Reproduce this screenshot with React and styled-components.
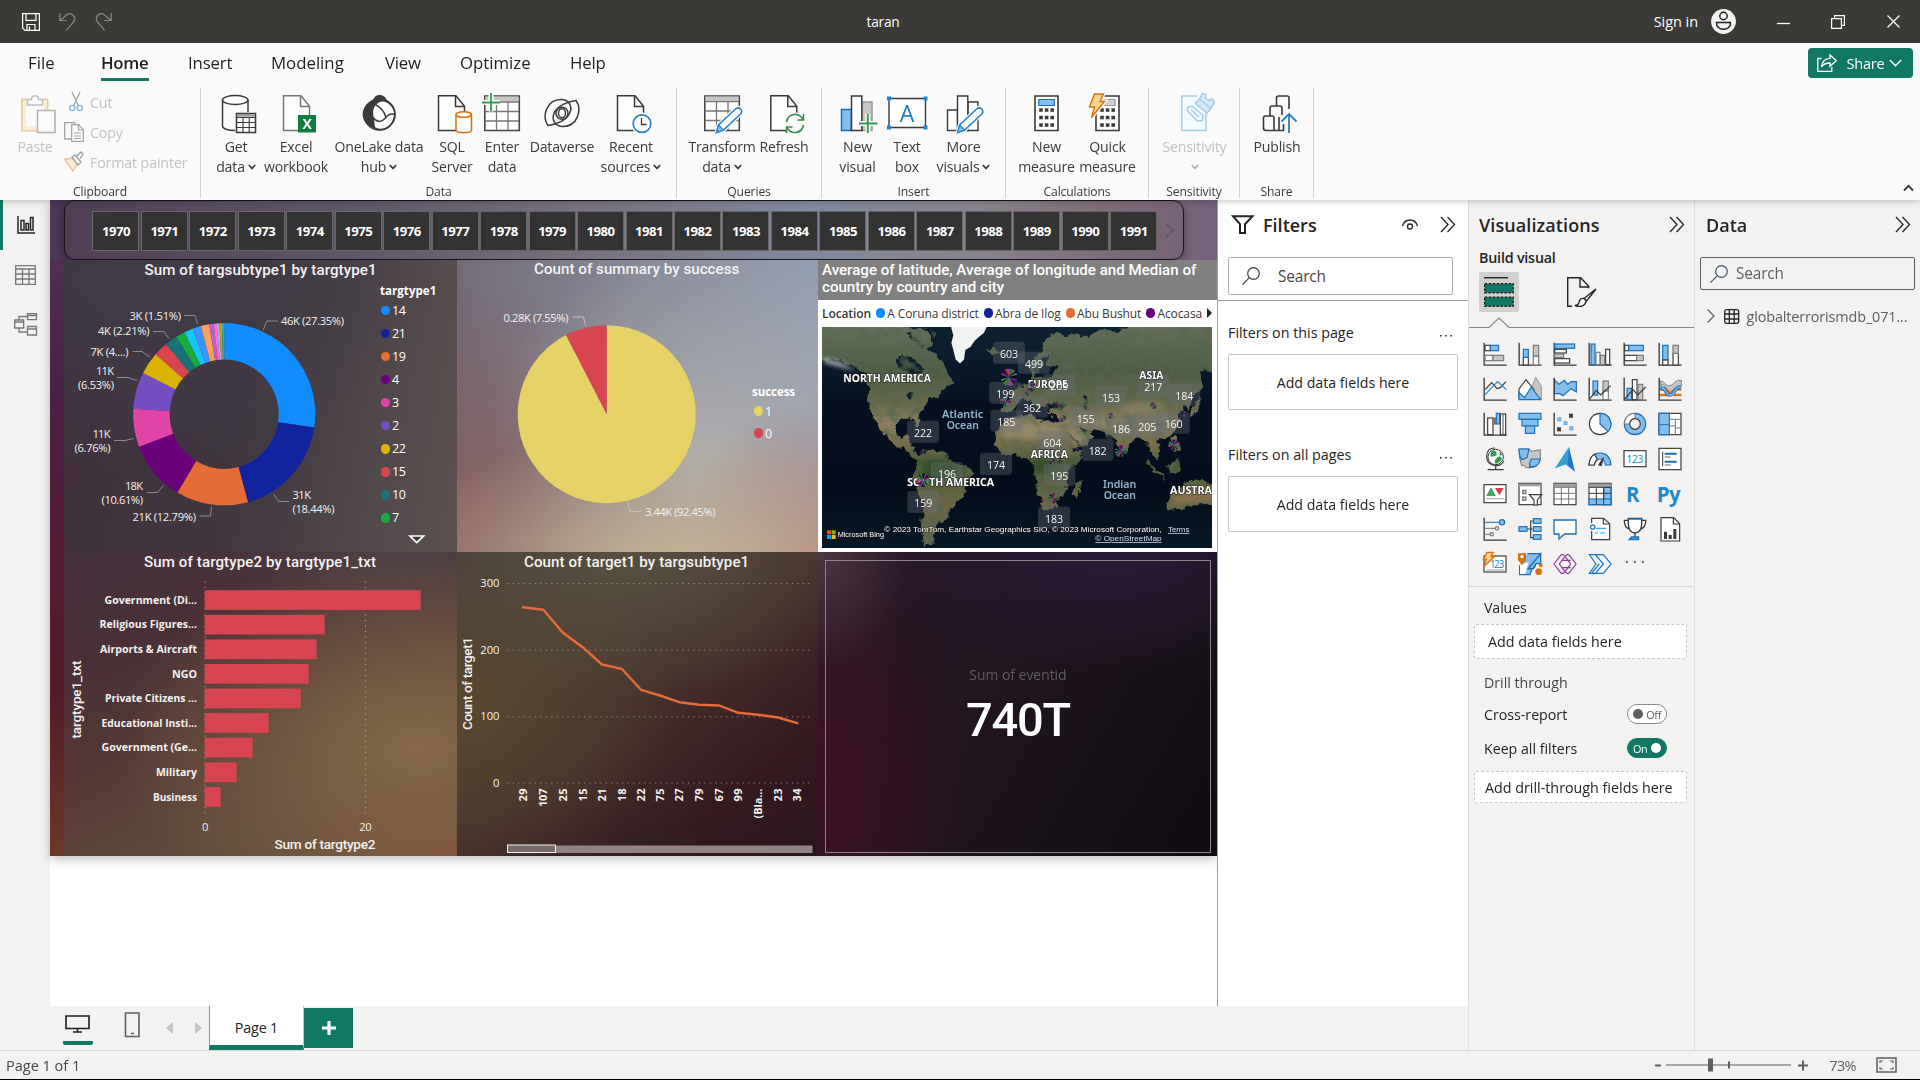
import React from "react";
import styled, { createGlobalStyle, css } from "styled-components";

const GlobalStyle = createGlobalStyle`
  * { box-sizing: border-box; }
  body { margin: 0; background: #f3f2f1; }
  svg { display: block; flex: none; overflow: visible; }
`;

const UI = `"Open Sans", "Noto Sans", sans-serif`;
const DIN = `Roboto, "Open Sans", sans-serif`;
const INK = "#3b3a39";
const GREY = "#797775";
const LGREY = "#c8c6c4";
const BLUE = "#1a6fb8";
const SKY = "#83beec";
const GREEN = "#117865";

/* ---------- shell ---------- */
const App_ = styled.div`
  width: 1920px;
  height: 1080px;
  display: flex;
  flex-direction: column;
  overflow: hidden;
  background: #f3f2f1;
  border-bottom: 1px solid #000;
  font-family: ${UI};
  color: #252423;
`;
const TitleBar = styled.header`
  height: 43px;
  flex: none;
  display: grid;
  grid-template-columns: 1fr auto 1fr;
  align-items: center;
  background: #3b3a37;
  color: #fff;
  font-size: 13.7px;
`;
const QuickAccess = styled.div`
  display: flex;
  gap: 19px;
  padding-left: 22px;
`;
const DocName = styled.div`
  transform: translateX(-77px);
  letter-spacing: -0.2px;
`;
const WindowTools = styled.div`
  display: flex;
  align-items: center;
  justify-content: flex-end;
  padding-right: 20px;
`;
const SignIn = styled.span`
  font-size: 14.5px;
  letter-spacing: -0.05px;
  margin-right: 13px;
`;
const WinBtn = styled.span`
  margin-left: ${(p) => p.$gap}px;
`;

/* ---------- ribbon ---------- */
const Ribbon = styled.section`
  height: 157px;
  flex: none;
  background: #fafafa;
  box-shadow: 0 2px 6px rgba(0, 0, 0, 0.2);
  position: relative;
  z-index: 2;
  display: flex;
  flex-direction: column;
`;
const TabRow = styled.nav`
  height: 45px;
  flex: none;
  display: flex;
  align-items: flex-start;
  padding: 5px 7px 0 28px;
`;
const Tab = styled.span`
  height: 33px;
  width: ${(p) => p.$w}px;
  margin-right: ${(p) => p.$mr}px;
  line-height: 30px;
  font-size: 16.8px;
  letter-spacing: ${(p) => p.$ls ?? -0.2}px;
  white-space: nowrap;
  color: #201f1e;
  ${(p) =>
    p.$active &&
    css`
      font-weight: 600;
      border-bottom: 3px solid ${GREEN};
    `}
`;
const ShareBtn = styled.button`
  margin-left: auto;
  width: 105px;
  height: 30px;
  border: 0;
  border-radius: 4px;
  background: ${GREEN};
  color: #fff;
  font: 14.6px ${UI};
  letter-spacing: -0.2px;
  display: flex;
  align-items: center;
  justify-content: space-between;
  padding: 0 11px 1px 9px;
`;
const ShareText = styled.span`
  margin-left: 5px;
`;
const Groups = styled.div`
  display: flex;
  height: 110px;
  position: relative;
`;
const Group = styled.div`
  width: ${(p) => p.$w}px;
  border-right: 1px solid #d2d0ce;
  display: flex;
  flex-direction: column;
  align-items: center;
`;
const GroupItems = styled.div`
  height: 95px;
  flex: none;
  width: 100%;
  display: flex;
  padding: 5px 0 0 ${(p) => p.$pl ?? 0}px;
`;
const GroupName = styled.div`
  flex: none;
  font-size: 12.1px;
  line-height: 17px;
  letter-spacing: -0.1px;
  color: #3b3a39;
`;
const Item = styled.div`
  width: ${(p) => p.$w}px;
  flex: none;
  display: flex;
  flex-direction: column;
  align-items: center;
  font-size: 14.1px;
  line-height: 20px;
  letter-spacing: -0.17px;
  white-space: nowrap;
  color: ${(p) => (p.$off ? "#c4c2c0" : "#3b3a39")};
`;
const ItemIcon = styled.span`
  height: 44px;
`;
const ItemLine = styled.span`
  height: 20px;
  display: flex;
  align-items: center;
  gap: 3px;
`;
const ClipList = styled.div`
  display: flex;
  flex-direction: column;
  margin-left: 7px;
`;
const ClipRow = styled.div`
  height: 30px;
  margin-top: ${(p) => p.$mt ?? 0}px;
  display: flex;
  align-items: center;
  gap: 6px;
  font-size: 14.2px;
  letter-spacing: -0.12px;
  color: #c4c2c0;
  white-space: nowrap;
`;
const WideGlyph = styled.span`
  margin-left: -5px;
`;
const Collapse = styled.div`
  margin-left: auto;
  align-self: flex-end;
  padding: 0 6px 6px 0;
`;

/* ---------- work area ---------- */
const Work = styled.main`
  flex: 1;
  min-height: 0;
  display: flex;
`;
const Left = styled.div`
  width: 1468px;
  flex: none;
  display: flex;
  flex-direction: column;
`;
const LeftTop = styled.div`
  height: 806px;
  display: flex;
`;
const Rail = styled.nav`
  width: 50px;
  background: #f3f2f1;
`;
const RailItem = styled.div`
  height: ${(p) => p.$h ?? 49}px;
  border-left: 3px solid ${(p) => (p.$active ? GREEN : "transparent")};
  display: flex;
  align-items: center;
  padding-left: ${(p) => p.$pl}px;
`;
const Stage = styled.div`
  width: 1167px;
  background: #fff;
`;
const Report = styled.div`
  height: 656px;
  display: flex;
  flex-direction: column;
  padding-left: 14px;
  box-shadow: 0 3px 10px rgba(0, 0, 0, 0.25);
  background: linear-gradient(180deg, #533757 0%, #4b2147 28%, #571a35 55%, #551a28 75%, #6c3828 100%);
`;
const SlicerRow = styled.div`
  height: 60px;
  margin-left: -14px;
  padding-left: 14px;
  background: linear-gradient(90deg, #4d3855 0%, #5f586c 28%, #7b7282 45%, #848fa6 65%, #8c8791 80%, #7f6a79 92%, #75607c 100%);
`;
const Slicer = styled.div`
  width: 1120px;
  height: 60px;
  padding: 10px 8px 0 27.4px;
  display: flex;
  gap: 1.47px;
  border: 1px solid #17151a;
  border-radius: 11px;
  background: rgba(110, 100, 100, 0.12);
  box-shadow: 0 3px 8px rgba(0, 0, 0, 0.4);
`;
const Year = styled.div`
  width: 47px;
  height: 40px;
  flex: none;
  border: 1px solid #666;
  background: #333;
  color: #fff;
  font-weight: 700;
  font-size: 13.2px;
  letter-spacing: -0.55px;
  line-height: 39px;
  text-align: center;
`;
const SlicerNext = styled.div`
  padding: 12px 0 0 6px;
`;
const VisualRow = styled.div`
  display: grid;
  grid-template-columns: 393px 360.5px 399.5px;
  height: ${(p) => p.$h}px;
`;
const Visual = styled.section`
  display: flex;
  flex-direction: column;
  overflow: hidden;
  min-width: 0;
  color: #fff;
  background: ${(p) => p.$bg};
`;
const VisualTitle = styled.h3`
  margin: ${(p) => p.$mt ?? 0}px 0 0 ${(p) => p.$ml}px;
  height: 20px;
  font: 500 15.1px/20px ${DIN};
  letter-spacing: ${(p) => p.$ls ?? 0.1}px;
  white-space: nowrap;
  color: #f3f2f1;
`;
const VisualBody = styled.div`
  display: flex;
  flex: 1;
`;
const Legend = styled.div`
  display: flex;
  flex-direction: column;
  padding-top: ${(p) => p.$pt}px;
  font-size: 13px;
`;
const LegendTitle = styled.div`
  font-weight: 700;
  font-size: 11.6px;
  height: 18px;
  line-height: 20px;
  letter-spacing: ${(p) => p.$ls ?? 0}px;
`;
const LegendItem = styled.div`
  height: ${(p) => p.$h}px;
  display: flex;
  align-items: center;
  gap: 1.5px;
  font-size: 12.5px;
  letter-spacing: -0.3px;
  padding-left: ${(p) => p.$pl ?? 0}px;
`;
const Dot = styled.i`
  width: 9.4px;
  height: 9.4px;
  border-radius: 50%;
  flex: none;
  background: ${(p) => p.$c};
`;
const LegendMore = styled.div`
  padding: 6px 0 0 28px;
`;

const MapVisual = styled(Visual)`
  background: #fff;
  color: #252423;
`;
const MapTitle = styled.h3`
  margin: 0;
  height: 39.5px;
  background: #808080;
  color: #fff;
  padding: 1.5px 0 0 4.5px;
  font: 500 15.1px/17px ${DIN};
  letter-spacing: 0;
`;
const MapLegend = styled.div`
  height: 27px;
  padding: 0 5px 0 4.5px;
  display: flex;
  align-items: center;
  justify-content: space-between;
  font-size: 12px;
  letter-spacing: -0.1px;
  white-space: nowrap;
  color: #3b3a39;
  b { font-weight: 600; }
`;
const MapKey = styled.span`
  display: inline-flex;
  align-items: center;
  gap: 2px;
`;
const MapBox = styled.div`
  margin-left: 4.5px;
  width: 390px;
  height: 221px;
  overflow: hidden;
`;
const CardFrame = styled.div`
  margin: 8px 6px 3.5px 7.5px;
  flex: 1;
  border: 1px solid #8a8388;
  display: flex;
  flex-direction: column;
  align-items: center;
  padding-top: 104px;
`;
const CardLabel = styled.div`
  font-size: 13.9px;
  line-height: 20px;
  color: #605e5c;
`;
const CardValue = styled.div`
  font: 500 47px/56px ${DIN};
  margin-top: 7px;
  color: #fff;
  letter-spacing: -1.2px;
`;

/* ---------- page tabs ---------- */
const PageBar = styled.div`
  height: 44px;
  display: flex;
  padding-left: 63px;
  background: #f3f2f1;
`;
const ViewMode = styled.div`
  width: 30px;
  height: 39px;
  margin-right: ${(p) => p.$mr}px;
  display: flex;
  justify-content: center;
  align-items: flex-start;
  padding: ${(p) => p.$pt}px 2px 0 0;
  border-bottom: 4px solid ${(p) => (p.$on ? GREEN : "transparent")};
  border-radius: 2px;
`;
const PageArrows = styled.div`
  display: flex;
  gap: 22px;
  padding: 16px 7px 0 19px;
`;
const PageTab = styled.div`
  width: 95px;
  height: 44px;
  background: #fff;
  border-left: 1px solid #979593;
  border-right: 1px solid #c8c6c4;
  border-bottom: 5px solid ${GREEN};
  text-align: center;
  font-size: 14.4px;
  font-weight: 500;
  line-height: 43px;
  letter-spacing: -0.2px;
`;
const AddPage = styled.div`
  width: 49px;
  height: 40px;
  margin-top: 2px;
  background: ${GREEN};
  display: grid;
  place-items: center;
`;

/* ---------- panes ---------- */
const Filters = styled.aside`
  width: 251px;
  background: #fff;
  border-left: 1px solid #a19f9d;
  display: flex;
  flex-direction: column;
`;
const FilterTop = styled.div`
  height: 101px;
  border-bottom: 1px solid #a19f9d;
  padding: 12px 12px 0 10px;
`;
const PaneHead = styled.div`
  height: 25px;
  display: flex;
  align-items: center;
  font-size: 18px;
  font-weight: 600;
  letter-spacing: ${(p) => p.$ls ?? 0}px;
`;
const PaneTitle = styled.span`
  flex: 1;
  margin-left: ${(p) => p.$ml ?? 0}px;
`;
const EyeWrap = styled.span`
  margin-right: 22px;
`;
const SearchBox = styled.div`
  width: ${(p) => p.$w}px;
  height: ${(p) => p.$h}px;
  margin-top: 20px;
  border: 1px solid ${(p) => p.$bc};
  border-radius: 2px;
  display: flex;
  align-items: center;
  gap: ${(p) => p.$gap}px;
  padding-left: ${(p) => p.$pl}px;
  font-size: 15.4px;
  letter-spacing: -0.15px;
  color: ${(p) => p.$c};
`;
const FilterGroup = styled.div`
  padding: 0 10px 0 10px;
  margin-top: ${(p) => p.$mt}px;
`;
const FilterHead = styled.div`
  height: 32px;
  display: flex;
  justify-content: space-between;
  font-size: 14.3px;
  line-height: 21px;
  padding-right: 5px;
`;
const DropWell = styled.div`
  height: 56px;
  border: 1px solid #c8c6c4;
  border-radius: 2px;
  display: grid;
  place-items: center;
  font-size: 14.2px;
  padding-top: 1px;
`;
const Viz = styled.aside`
  width: 226px;
  flex: none;
  border-left: 1px solid #e1dfdd;
  display: flex;
  flex-direction: column;
`;
const VizHead = styled.div`
  padding: 12px 9px 0 10px;
`;
const BuildLabel = styled.div`
  font-size: 14.3px;
  font-weight: 600;
  letter-spacing: -0.2px;
  line-height: 20px;
  margin-top: 11px;
`;
const ModeRow = styled.div`
  display: flex;
  gap: 43px;
  margin-top: 4px;
`;
const Mode = styled.span`
  width: 40px;
  height: 40px;
  border-radius: 2px;
  background: ${(p) => (p.$on ? "#d2d0ce" : "transparent")};
  display: grid;
  place-items: center;
`;
const IconGrid = styled.div`
  display: grid;
  grid-template-columns: repeat(6, 35px);
  grid-auto-rows: 35px;
  padding: 8px 0 0 8px;
  height: 259px;
  place-items: center;
  border-bottom: 1px solid #d8d6d4;
`;
const Glyph = styled.span`
  font: 700 20.5px/24px ${UI};
  color: #2288c8;
  letter-spacing: -0.5px;
  padding-right: ${(p) => p.$pr}px;
`;
const FieldLabel = styled.div`
  height: 20px;
  line-height: 20px;
  font-size: 14.2px;
  letter-spacing: ${(p) => (p.$fw ? 0 : -0.1)}px;
  margin: ${(p) => p.$mt}px 0 0 15px;
  font-weight: ${(p) => p.$fw ?? 400};
  color: ${(p) => (p.$fw ? "#484644" : "#252423")};
`;
const FieldWell = styled.div`
  width: 213px;
  height: ${(p) => p.$h}px;
  margin: ${(p) => p.$mt}px 0 0 5px;
  padding-left: ${(p) => p.$pl}px;
  border: 1px dashed #c8c6c4;
  border-radius: 2px;
  background: #fff;
  display: flex;
  align-items: center;
  font-size: 14.3px;
  letter-spacing: 0;
  white-space: nowrap;
`;
const ToggleRow = styled.div`
  height: 20px;
  margin: ${(p) => p.$mt}px 27px 0 15px;
  display: flex;
  justify-content: space-between;
  align-items: center;
  font-size: 14.2px;
`;
const Toggle = styled.span`
  width: 40px;
  height: 20px;
  border-radius: 10px;
  display: flex;
  align-items: center;
  justify-content: space-between;
  flex-direction: ${(p) => (p.$on ? "row-reverse" : "row")};
  padding: 0 5px;
  font-size: 10.8px;
  letter-spacing: -0.3px;
  background: ${(p) => (p.$on ? GREEN : "#fff")};
  border: 1px solid ${(p) => (p.$on ? GREEN : "#8a8886")};
  color: ${(p) => (p.$on ? "#fff" : "#605e5c")};
  &::before {
    content: "";
    width: 10px;
    height: 10px;
    border-radius: 50%;
    background: ${(p) => (p.$on ? "#fff" : "#605e5c")};
  }
`;
const DataPane = styled.aside`
  flex: 1;
  min-width: 0;
  border-left: 1px solid #e1dfdd;
  padding: 12px 10px 0 11px;
`;
const DataTitle = styled(PaneHead)`
  width: 205px;
`;
const DataSearch = styled(SearchBox)`
  margin-left: -6px;
`;
const TableRow = styled.div`
  height: 22px;
  margin: 15px 0 0 1px;
  display: flex;
  align-items: center;
  font-size: 14.4px;
  color: #605e5c;
  letter-spacing: -0.12px;
  white-space: nowrap;
`;
const TableName = styled.span`
  margin-left: 6.5px;
`;
const Status = styled.footer`
  height: 29px;
  flex: none;
  border-top: 1px solid #d8d6d4;
  display: flex;
  align-items: center;
  padding: 0 23px 0 6px;
  font-size: 14.5px;
  color: #484644;
  letter-spacing: 0;
`;
const Zoom = styled.div`
  margin-left: auto;
  display: flex;
  align-items: center;
  color: #605e5c;
`;
const Pct = styled.span`
  margin: 0 20px 0 21.5px;
  letter-spacing: -0.6px;
`;

/* ---------- small drawings ---------- */
const Svg = ({ w, h = w, vb, children, ...r }) => (
  <svg width={w} height={h} viewBox={vb || `0 0 ${w} ${h}`} fill="none" {...r}>
    {children}
  </svg>
);
const Chevrons = () => (
  <Svg w={16} h={17} stroke="#252423" strokeWidth="1.3">
    <path d="M1 1l7 7.5-7 7.5M7.500 1l7 7.500-7 7.500" />
  </Svg>
);
const Lens = ({ c = "#3b3a39" }) => (
  <Svg w={18} h={18} stroke={c} strokeWidth="1.200">
    <circle cx="11.500" cy="6.500" r="5.800" />
    <path d="M7.400 10.700L0.500 17.600" />
  </Svg>
);
const Caret = ({ c = INK }) => (
  <Svg w={8} h={6} stroke={c} strokeWidth="1.700">
    <path d="M0.800 1l3.200 3.400L7.200 1" />
  </Svg>
);
const Dots = () => (
  <Svg w={14} h={20} fill="#252423">
    <path d="M1 13h1.500v1.500H1zM6.200 13h1.500v1.500H6.200zM11.400 13h1.500v1.500h-1.500z" fill="#252423" />
  </Svg>
);

/* ribbon icons, 40 x 40 */
const Doc = ({ x = 6.5, c = INK, o = 1 }) => (
  <path d={`M${x} 2.700h17.500l8.500 10.500V37.500H${x}zM${x + 17} 3v10.500h8.500`} stroke={c} strokeWidth="1.500" fill="#fdfdfd" opacity={o} />
);
const Pencil = ({ dx = 0 }) => (
  <g transform={`translate(${dx} 0)`}>
    <path d="M14.500 39.500l2-7.500L34 15.500q2.500-1.500 4.500 0.500t0.500 4.500L21.500 37z" fill="#fff" stroke="#fafafa" strokeWidth="4" />
    <path d="M14.500 39.500l2-7.500L34 15.500q2.500-1.500 4.500 0.500t0.500 4.500L21.500 37z" fill="#fff" stroke="#2a82c4" strokeWidth="1.500" />
    <path d="M14.500 39.500l2-7.500 5 5z" fill="#83beec" stroke="#2a82c4" strokeWidth="1.200" />
  </g>
);
const Bolt = () => (
  <path d="M6.500 1h9l-3.500 7.500h4.500L3.500 24.500l3-10.500H1.500z" fill="#fbd48a" stroke="#d8700f" strokeWidth="1.400" />
);
const dotsAt = (xs, ys) =>
  xs.flatMap((x) => ys.map((y) => <rect key={`${x}-${y}`} x={x - 1.8} y={y - 1.7} width="3.600" height="3.500" fill={INK} />));

const RibbonIcons = {
  paste: (
    <g opacity="0.450">
      <path d="M12 6.500H7v31h25.500V6.500H28" stroke="#e0963c" strokeWidth="2" />
      <path d="M9.500 9h21v26h-21z" stroke="#f8dfa8" strokeWidth="3" />
      <path d="M12.500 12V6.500h4c0-5 7-5 7 0h4V12z" fill="#fff" stroke="#797775" strokeWidth="1.500" />
      <path d="M22.500 17.500h17.500v22H22.500z" fill="#fff" stroke="#605e5c" strokeWidth="1.600" />
    </g>
  ),
  getData: (
    <g stroke={INK} strokeWidth="1.500">
      <path d="M6.500 7v26c0 2.500 5 4.500 12.500 4.500M32 7v12" />
      <ellipse cx="19.200" cy="7" rx="12.800" ry="4.400" />
      <path d="M20.500 20.500h19v19h-19z" fill="#fff" />
      <path d="M20.500 22.200h19" stroke="#a19f9d" strokeWidth="3" />
      <path d="M20.500 24.500h19M20.500 29.500h19M20.500 34.500h19M27 24v15M33.200 24v15M20.500 20.500h19v19h-19z" strokeWidth="1.100" />
    </g>
  ),
  excel: (
    <g>
      <Doc x={7.5} c="#797775" />
      <path d="M22 22h18v17.500H22z" fill="#107c41" />
      <text x="31" y="36" fontSize="14" fontWeight="700" fill="#fff" textAnchor="middle" fontFamily="Open Sans, sans-serif">X</text>
    </g>
  ),
  onelake: (
    <g stroke={INK} strokeWidth="1.500">
      <circle cx="20.500" cy="21.500" r="15.500" fill="#fff" />
      <path d="M14.500 7.500C17 1 25 1 27.500 8.500 22 6.500 17 9 14.500 14c-1.500 3.500-1.500 7-0.500 11s1 6.500 1 9.500C6 32 2.500 23 5.500 16c1.500-4 5-6.500 9-8.500z" fill={INK} />
      <path d="M27 8c5.500 3 9 8 8.800 13.500-4-1.500-7.300 0.500-9.800 4-4 4.500-9.500 3.500-12-1.500M35.800 21.500C35 30 29 36.500 21.500 36.500c-3.500 0-5.500-1-7-3" />
      <path d="M16.500 11.500c5.500 3 9 7.500 10.500 13" />
    </g>
  ),
  sql: (
    <g>
      <Doc x={6.5} />
      <path d="M24 21.500v15.500c0 3.500 15.500 3.500 15.500 0V21.500" fill="#fff" stroke="#d8700f" strokeWidth="1.500" />
      <ellipse cx="31.700" cy="21.500" rx="7.700" ry="2.800" fill="#fff" stroke="#d8700f" strokeWidth="1.500" />
    </g>
  ),
  enter: (
    <g>
      <path d="M2.800 3h34.500v34.500H2.800z" fill="#fff" stroke="#484644" strokeWidth="1.600" />
      <path d="M3.500 6h33" stroke="#c8c6c4" strokeWidth="5" />
      <path d="M3 9h34M3 18.500h34M3 28h34M14.500 9v28M26 9v28" stroke="#797775" strokeWidth="1.300" />
      <path d="M9 0v18.500M0 9.500h18" stroke="#fafafa" strokeWidth="5" />
      <path d="M9 0v18.500M0 9.500h18" stroke="#2f9e4f" strokeWidth="1.800" />
    </g>
  ),
  dataverse: (
    <g stroke={INK} strokeWidth="1.500">
      <path d="M34 7.500c6.500 9 1.500 26-13 26C13 33.500 9.500 27 12 20.500 14.800 13 25 8.500 34 7.500z" />
      <path d="M6 32.500c-6.500-9-1.500-26 13-26 8 0 11.500 6.500 9 13C25.200 27 15 31.500 6 32.500z" />
      <circle cx="20" cy="20.200" r="6" />
      <ellipse cx="20" cy="20.200" rx="3.500" ry="4.500" />
    </g>
  ),
  recent: (
    <g>
      <Doc x={6.5} />
      <circle cx="31" cy="30.600" r="11" fill="#fafafa" />
      <circle cx="31" cy="30.600" r="8.800" fill="#fff" stroke="#2a82c4" strokeWidth="1.700" />
      <path d="M30.500 25v6.500h5" stroke={INK} strokeWidth="1.300" />
    </g>
  ),
  transform: (
    <g>
      <path d="M2.800 3h34.500v34.500H2.800z" fill="#fff" stroke="#484644" strokeWidth="1.600" />
      <path d="M3.500 5.500h33" stroke="#c8c6c4" strokeWidth="4" />
      <path d="M3 8.500h34M3 18h34M3 27.500h34M14.500 9v28M26 9v28" stroke="#797775" strokeWidth="1.300" />
      <Pencil />
    </g>
  ),
  refresh: (
    <g>
      <Doc x={6.8} />
      <circle cx="31" cy="30.500" r="11" fill="#fafafa" />
      <path d="M22.500 29c1.500-9 13-10 16.500-2.500M39.500 32c-1.500 9-13 10-16.500 2.500M39.500 21v6h-6M22.500 40v-6h6" stroke="#2f8f4a" strokeWidth="1.600" />
    </g>
  ),
  newVisual: (
    <g>
      <path d="M24 9h10v28.500H24z" fill="#c8c6c4" stroke="#979593" strokeWidth="1.500" />
      <path d="M3.500 16.500h10v21h-10z" fill={SKY} stroke="#1a6fb8" strokeWidth="1.500" />
      <path d="M13.500 3h10.300v34.500H13.500z" fill="#fff" stroke={INK} strokeWidth="1.500" />
      <path d="M29.800 21v19M21 30.500h18" stroke="#fafafa" strokeWidth="5" />
      <path d="M29.800 21v19M21 30.500h18.500" stroke="#2f9e4f" strokeWidth="1.900" />
    </g>
  ),
  textBox: (
    <g>
      <path d="M2 5.500h36.500v29H2z" fill="#fff" stroke={INK} strokeWidth="1.400" />
      <path d="M0 3.500h4v4H0zM36.500 3.500h4v4h-4zM0 32.500h4v4H0zM36.500 32.500h4v4h-4z" fill="#1a86cf" />
      <text x="20" y="28.500" fontSize="23" fill="#1a7fc4" textAnchor="middle" fontFamily="Open Sans, sans-serif">A</text>
    </g>
  ),
  moreVisuals: (
    <g>
      <path d="M24 9h10v28.500H24zM3.500 17h10v20.500h-10z" fill="#fff" stroke={INK} strokeWidth="1.400" />
      <path d="M13.500 3h10.300v34.500H13.500z" fill="#fff" stroke={INK} strokeWidth="1.400" />
      <Pencil dx={-0.8} />
    </g>
  ),
  newMeasure: (
    <g>
      <path d="M8 3h23v34.500H8z" fill="#fff" stroke={INK} strokeWidth="1.600" />
      <path d="M11.800 6.500h15.500v6H11.800z" fill={SKY} stroke="#1a6fb8" strokeWidth="1.200" />
      {dotsAt([14, 19.600, 25.200], [17, 24.500, 32])}
    </g>
  ),
  quickMeasure: (
    <g>
      <path d="M8 3h23v34.500H8z" fill="#fff" stroke={INK} strokeWidth="1.600" />
      <path d="M14 6.500h13v6H14z" fill="#d2d0ce" stroke="#979593" strokeWidth="1.200" />
      {dotsAt([14, 19.600, 25.200], [17, 24.500, 32])}
      <path d="M6.500 1h9l-3.500 7.500h4.500L3.500 24.500l3-10.500H1.500z" stroke="#fafafa" strokeWidth="4" />
      <Bolt />
    </g>
  ),
  sensitivity: (
    <g stroke="#a3cde6" strokeWidth="1.500">
      <path d="M31 17v20.500H6.800V3H22" fill="#f3f9fd" />
      <path d="M12.500 14.500l4.500-1.500 11 9.500-0.500 5-5 0.500L12.500 18zM16 16.500l8 7.500" />
      <path d="M20.500 10.500l4-4.500 11.500 9.500-4 4.500zM24.500 6l3-5.500 3.500 1-0.500 3.500 3.500 2.500 3-1.500 2.500 3-3.500 6" fill="#d6eaf6" />
    </g>
  ),
  publish: (
    <g stroke={INK} strokeWidth="1.600">
      <path d="M6.500 35V25q0-2 2-2h6.500q2 0 2 2v12.500H9q-2.500 0-2.500-2.500zM13 22.500V15q0-2 2-2h8q2 0 2 2v7M19.500 12.500V5q0-2 2-2h8.500q2 0 2 2v11M17 37.500h9.500V31M22 37V24" />
      <path d="M32 40V21M24.500 28.500L32 21l7.500 7.500" stroke="#2a7fb8" strokeWidth="1.800" />
    </g>
  ),
};
const RIcon = ({ name }) => (
  <ItemIcon>
    <Svg w={40}>{RibbonIcons[name]}</Svg>
  </ItemIcon>
);
const RibbonItem = ({ w, icon, l1, l2, caret, off }) => (
  <Item $w={w} $off={off}>
    <RIcon name={icon} />
    <ItemLine>{l1}</ItemLine>
    <ItemLine>
      {l2}
      {caret && <Caret c={off ? "#b3b0ad" : INK} />}
    </ItemLine>
  </Item>
);

const GROUPS = [
  { name: "Data", w: 476, pl: 8, items: [
    { w: 54, icon: "getData", l1: "Get", l2: "data", caret: true },
    { w: 66, icon: "excel", l1: "Excel", l2: "workbook" },
    { w: 100, icon: "onelake", l1: "OneLake data", l2: "hub", caret: true },
    { w: 46, icon: "sql", l1: "SQL", l2: "Server" },
    { w: 54, icon: "enter", l1: "Enter", l2: "data" },
    { w: 66, icon: "dataverse", l1: "Dataverse" },
    { w: 72, icon: "recent", l1: "Recent", l2: "sources", caret: true } ] },
  { name: "Queries", w: 145, pl: 12, items: [
    { w: 66, icon: "transform", l1: "Transform", l2: "data", caret: true },
    { w: 58, icon: "refresh", l1: "Refresh" } ] },
  { name: "Insert", w: 184, pl: 12, items: [
    { w: 47, icon: "newVisual", l1: "New", l2: "visual" },
    { w: 52, icon: "textBox", l1: "Text", l2: "box" },
    { w: 61, icon: "moreVisuals", l1: "More", l2: "visuals", caret: true } ] },
  { name: "Calculations", w: 143, pl: 10, items: [
    { w: 61, icon: "newMeasure", l1: "New", l2: "measure" },
    { w: 61, icon: "quickMeasure", l1: "Quick", l2: "measure" } ] },
  { name: "Sensitivity", w: 91, pl: 0, items: [{ w: 91, icon: "sensitivity", l1: "Sensitivity", caret: true, off: true }] },
  { name: "Share", w: 74, pl: 0, items: [{ w: 74, icon: "publish", l1: "Publish" }] },
];

/* ---------- charts ---------- */
const polar = (cx, cy, r, pct) => {
  const a = (pct / 100) * Math.PI * 2;
  return [cx + r * Math.sin(a), cy - r * Math.cos(a)];
};
const slicePath = (cx, cy, R, r, a, b) => {
  const big = b - a > 50 ? 1 : 0;
  const [x1, y1] = polar(cx, cy, R, a);
  const [x2, y2] = polar(cx, cy, R, b);
  const [x3, y3] = polar(cx, cy, r, b);
  const [x4, y4] = polar(cx, cy, r, a);
  return `M${x1} ${y1}A${R} ${R} 0 ${big} 1 ${x2} ${y2}L${x3} ${y3}A${r} ${r} 0 ${big} 0 ${x4} ${y4}Z`;
};
const DONUT = [
  [0, 27.35, "#118dff"], [27.35, 45.79, "#12239e"], [45.79, 58.58, "#e66c37"], [58.58, 69.19, "#6b007b"],
  [69.19, 75.95, "#e044a7"], [75.95, 82.48, "#744ec2"], [82.48, 86.45, "#d9b300"], [86.45, 89, "#d64550"],
  [89, 91.2, "#197278"], [91.2, 92.85, "#1aab40"], [92.85, 94.4, "#15c6f4"], [94.4, 95.9, "#4092ff"],
  [95.9, 97.35, "#ffa058"], [97.35, 98.15, "#be5dc9"], [98.15, 98.7, "#f472d0"], [98.7, 99.15, "#b5a1ff"],
  [99.15, 99.6, "#c4a200"], [99.6, 100, "#25b0a0"],
];
const DONUT_LABELS = [
  ["46K (27.35%)", 281, 325, 63, "start"],
  ["31K", 292.500, 499, 18.500, "start"],
  ["(18.44%)", 292.500, 513, 42, "start"],
  ["21K (12.79%)", 196, 521, 63.500, "end"],
  ["18K", 143, 490, 18, "end"],
  ["(10.61%)", 143, 504, 41.500, "end"],
  ["11K", 110.500, 438, 18, "end"],
  ["(6.76%)", 110.500, 452, 36, "end"],
  ["11K", 114, 375, 18, "end"],
  ["(6.53%)", 114, 389, 36, "end"],
  ["7K (4....)", 128.500, 356, 38, "end"],
  ["4K (2.21%)", 149.500, 335, 51.500, "end"],
  ["3K (1.51%)", 181, 320, 51.500, "end"],
];
const ChartLabel = styled.text`
  font: ${(p) => p.$w ?? 400} ${(p) => p.$s ?? 11.2}px ${UI};
  fill: #f3f2f1;
`;
const AxisTitle = styled.text`
  font: 500 13.6px ${DIN};
  fill: #f3f2f1;
`;
const Donut = () => (
  <Svg w={316} h={271} vb="64 280 316 271">
    {DONUT.map(([a, b, c]) => (
      <path key={c} d={slicePath(224.200, 414.200, 91.100, 54.600, a, b)} fill={c} />
    ))}
    <path stroke="#8d8a8c" strokeWidth="1" d="M263 330l4-9h11M273.500 494l5 7.500h10.500M211.500 507l-1 9h-11M163.500 485.500l-6 7h-10.500M133.500 438.500l-8.500 2h-11M137 380.500l-9-3h-11M150 357l-8-5.500h-9.500M169 338.500l-5-7h-11M197.500 324l-2.500-8.500h-11" />
    {DONUT_LABELS.map(([t, x, y, len, anchor]) => (
      <ChartLabel key={`${t}${y}`} x={x} y={y} textLength={len} textAnchor={anchor}>{t}</ChartLabel>
    ))}
  </Svg>
);
const Pie = () => (
  <Svg w={295} h={273} vb="457 278.500 295 273">
    <path d={slicePath(606.700, 413.700, 89, 0, 0, 92.45)} fill="#e6d166" />
    <path d={slicePath(606.700, 413.700, 89, 0, 92.45, 100)} fill="#d64550" />
    <path stroke="#c9c2bc" strokeWidth="1" d="M585.500 325l-2-8.500h-11M628 502l2 9h11" />
    <ChartLabel x="503.500" y="321" textLength="65">0.28K (7.55%)</ChartLabel>
    <ChartLabel x="645" y="515" textLength="70.500">3.44K (92.45%)</ChartLabel>
  </Svg>
);
const BARS = [
  ["Government (Di...", 27, 92.5], ["Religious Figures...", 15, 97.5], ["Airports & Aircraft", 14, 97], ["NGO", 13, 25],
  ["Private Citizens ...", 12, 92], ["Educational Insti...", 8, 95.5], ["Government (Ge...", 6, 95.5], ["Military", 4, 41], ["Business", 2, 44],
];
const BarChart = () => (
  <Svg w={393} h={284} vb="64 571.500 393 284">
    <path d="M205 581v236M365.500 581v236" stroke="#b8aea8" strokeWidth="1" strokeDasharray="1 4.500" />
    {BARS.map(([t, v, len], i) => (
      <g key={t}>
        <rect x="204.700" y={589.7 + i * 24.6} width={v * 8} height="19.700" fill="#d64550" />
        <ChartLabel $w={700} $s={11.3} x="197" y={603.3 + i * 24.6} textLength={len} lengthAdjust="spacingAndGlyphs" textAnchor="end">{t}</ChartLabel>
      </g>
    ))}
    <ChartLabel x="205.300" y="830.500" textAnchor="middle">0</ChartLabel>
    <ChartLabel x="365.500" y="830.500" textAnchor="middle" textLength="12.500">20</ChartLabel>
    <AxisTitle x="274.500" y="848.500" textLength="101">Sum of targtype2</AxisTitle>
    <AxisTitle transform="translate(80.500 738) rotate(-90)" textLength="78">targtype1_txt</AxisTitle>
  </Svg>
);
const LINE = [
  [523, 606.7, "29"], [543.3, 609.3, "107"], [562.7, 632, "25"], [582.7, 646.7, "15"], [602, 664, "21"], [621.7, 668.3, "18"],
  [641, 689.3, "22"], [660, 695, "75"], [679.3, 701.7, "27"], [699.3, 704.3, "79"], [719.3, 705, "67"], [738.3, 712.3, "99"],
  [758.3, 714.3, "(Bla..."], [778, 717, "23"], [797.3, 722.7, "34"],
];
const LineChart = () => (
  <Svg w={360} h={284} vb="457 571.500 360 284">
    {[583, 649.5, 716.3, 782.5].map((y, i) => (
      <g key={y}>
        <path d={`M507.500 ${y}H812`} stroke="#a39a96" strokeWidth="1" strokeDasharray="1 4.470" />
        <ChartLabel x="499.500" y={y + 3.6} textAnchor="end">{300 - i * 100}</ChartLabel>
      </g>
    ))}
    <polyline points={LINE.map((p) => `${p[0]},${p[1]}`).join(" ")} stroke="#e66c37" strokeWidth="2.400" strokeLinejoin="round" strokeLinecap="round" />
    {LINE.map(([x, , t]) => (
      <ChartLabel key={t} $w={700} $s={11} transform={`translate(${x + 4} 788) rotate(-90)`} textAnchor="end" textLength={t.length === 2 ? 13 : t === "107" ? 18.500 : 30}>{t}</ChartLabel>
    ))}
    <AxisTitle transform="translate(472 729.500) rotate(-90)" textLength="93">Count of target1</AxisTitle>
    <text x="623" y="842" textLength="76" fontSize="13" fill="#2c2423" fontFamily="Roboto, sans-serif" fontStyle="italic">targsubtype1</text>
    <rect x="507" y="845" width="305.500" height="7.500" fill="#918384" />
    <rect x="507.500" y="844.500" width="48" height="7.500" fill="#756b68" stroke="#f3f2f1" />
  </Svg>
);

/* world map: 1170 x 662 drawing space */
const MAP_NUMBERS = [
  [627, 474, "603"], [702, 504, "499"], [616, 594, "199"], [696, 636, "362"], [619, 678, "185"], [369, 711, "222"],
  [778, 571, "209"], [933, 606, "153"], [1060, 573, "217"], [1153, 600, "184"], [857, 669, "155"], [963, 698, "186"],
  [1042, 693, "205"], [1121, 684, "160"], [893, 765, "182"], [757, 741, "604"], [588, 807, "174"], [441, 834, "196"],
  [778, 840, "195"], [370, 921, "159"], [762, 968, "183"],
];
const MAP_PIES = [
  [627, 543, 25], [617, 617, 14], [695, 572, 14], [681, 593, 7], [778, 629, 10], [789, 668, 10], [932, 659, 8], [1060, 629, 10],
  [1153, 653, 8], [1042, 745, 6], [1121, 746, 16], [963, 765, 18], [830, 762, 6], [756, 796, 9], [780, 791, 8], [761, 906, 15],
  [369, 768, 9], [441, 778, 7], [370, 852, 20],
];
const PIE_COLORS = ["#3a6a9f", "#101018", "#b03a48", "#111", "#6b007b", "#1f7a3c", "#0c0c14", "#b03a8a", "#2a8aa8", "#16101a", "#6a7a20", "#50409a"];
const MapPie = ({ x, y, r, k }) => (
  <g>
    {Array.from({ length: 24 }, (_, i) => (
      <path key={i} d={slicePath(x, y, r, 0, i * 4.166, (i + 1) * 4.166)} fill={PIE_COLORS[(i * 5 + k * 3) % 12]} />
    ))}
  </g>
);
const WorldMap = () => (
  <Svg w={390} h={221} vb="66 393 1170 662" preserveAspectRatio="none">
    <defs>
      <linearGradient id="sea" x1="0" y1="0" x2="0" y2="1">
        <stop offset="0" stopColor="#0e2232" />
        <stop offset="0.350" stopColor="#061021" />
        <stop offset="0.750" stopColor="#040d1b" />
        <stop offset="1" stopColor="#081826" />
      </linearGradient>
      <linearGradient id="land" gradientUnits="userSpaceOnUse" x1="0" y1="393" x2="0" y2="1055">
        <stop offset="0" stopColor="#646e5a" />
        <stop offset="0.200" stopColor="#505c44" />
        <stop offset="0.340" stopColor="#646848" />
        <stop offset="0.430" stopColor="#8a7e60" />
        <stop offset="0.540" stopColor="#726c48" />
        <stop offset="0.620" stopColor="#485834" />
        <stop offset="0.780" stopColor="#6a6543" />
        <stop offset="1" stopColor="#61644c" />
      </linearGradient>
      <filter id="grain" filterUnits="userSpaceOnUse" x="66" y="393" width="1170" height="662">
        <feTurbulence type="fractalNoise" baseFrequency="0.040" numOctaves="3" seed="8" result="w" />
        <feDisplacementMap in="SourceGraphic" in2="w" scale="26" xChannelSelector="R" yChannelSelector="G" result="d" />
        <feTurbulence type="fractalNoise" baseFrequency="0.030" numOctaves="4" seed="4" result="n" />
        <feColorMatrix in="n" type="matrix" values="0 0 0 0 0.090  0 0 0 0 0.140  0 0 0 0 0.080  0 2.300 0 0 -1" result="m" />
        <feComposite in="m" in2="d" operator="in" result="g" />
        <feMerge><feMergeNode in="d" /><feMergeNode in="g" /></feMerge>
      </filter>
      <filter id="soft" x="-20%" y="-20%" width="140%" height="140%"><feGaussianBlur stdDeviation="7" /></filter>
    </defs>
    <rect x="66" y="393" width="1170" height="662" fill="url(#sea)" />
    <g filter="url(#grain)">
      <path fill="url(#land)" d="M50 380H300L330 393 375 405 400 440 385 455 405 475 425 485 440 530 460 555 430 585 410 600 385 615 368 640 352 662 360 690 350 692 340 668 300 668 284 692 290 720 305 725 318 712 330 714 322 738 345 752 350 775 372 790 350 790 325 765 290 750 258 722 235 690 218 660 205 620 208 570 190 530 150 505 110 488 80 490 50 500z" />
      <path fill="url(#land)" d="M358 780L375 760 400 758 440 775 460 800 500 815 516 832 500 862 490 900 460 925 445 955 420 985 405 1010 395 1050 372 1048 366 990 372 920 360 890 335 850 345 810z" />
      <path fill="url(#land)" d="M606 640L600 612 640 606 630 590 655 575 690 560 690 530 720 545 760 540 770 510 740 510 745 470 720 500 700 540 680 510 720 470 740 430 770 405 800 420 830 410 860 425 900 400 960 405 1000 380 1250 380V520L1200 530 1210 580 1180 600 1165 640 1150 625 1140 650 1130 700 1100 725 1075 735 1080 770 1065 790 1060 770 1050 760 1042 735 1020 725 990 740 968 780 950 740 925 712 880 700 870 712 885 720 850 750 820 758 790 690 770 660 740 650 755 640 745 620 720 640 690 610 665 612 640 640 620 650z" />
      <path fill="url(#land)" d="M598 690L625 665 700 655 720 672 785 680 810 720 822 765 850 765 830 800 800 830 805 870 780 900 770 930 740 945 725 930 710 870 705 820 690 790 660 775 610 778 585 745 588 715z" />
      <path fill="url(#land)" d="M845 848L845 870 830 905 818 890 828 860zM1098 920L1125 890 1150 862 1190 850 1250 860V930L1200 920 1160 935 1110 945zM610 560L625 530 640 560 630 575zM560 460L590 455 600 470 575 480zM1180 630L1200 600 1195 640 1165 665zM1040 790L1080 830 1100 850 1060 830zM1100 800L1140 790 1140 830 1110 830zM1110 720L1130 720 1140 770 1120 760z" />
      <g fill="#0a1a29">
        <path d="M290 490L310 475 345 490 370 520 350 545 330 530 295 520zM320 590l10-8 14 12-8 20-12-4zM745 625L780 615 800 625 785 640 755 640zM850 600L864 605 862 640 850 632zM800 705L845 745 838 748 795 700zM835 692L860 702 855 710z" />
        <path d="M325 405l50 45-8 6-52-45zM385 393l22 32-12 4-22-32zM700 525l28-32 8 6-22 32z" />
      </g>
    </g>
    <path d="M453 393H560L552 410 540 420 524 434 512 452 496 462 492 490 480 502 467 490 460 462 454 440 460 418z" fill="#f1f2f2" />
    <g filter="url(#soft)">
      <path d="M610 695L640 678 775 692 795 730 700 728 615 725z" fill="#a08f70" opacity="0.650" />
      <path d="M805 695L855 722 842 742 826 745z" fill="#a89878" opacity="0.600" />
      <path d="M960 625L1060 612 1105 630 1060 648 980 650z" fill="#9a8a6c" opacity="0.500" />
      <path d="M870 690L900 650 925 655 915 695z" fill="#9a8a6c" opacity="0.450" />
      <path d="M1120 895L1236 875V915L1120 925z" fill="#a07c58" opacity="0.550" />
      <path d="M365 800q60-25 110 10 10 50-40 55-55 5-70-30z" fill="#2a4a24" opacity="0.750" />
      <path d="M700 790q40-10 60 10l-8 34q-40 5-50-24z" fill="#2c4a26" opacity="0.700" />
      <path d="M70 485l50 12 50 28-50-12-46-12z" fill="#e9ecec" opacity="0.700" />
    </g>
    {MAP_NUMBERS.map(([x, y, t]) => (
      <rect key={t} x={x - 48} y={y - 37} width="96" height="66" rx="9" fill="#6a6f78" opacity="0.360" />
    ))}
    <g fontFamily="Noto Sans, sans-serif" fontWeight="700" fontSize="29" fill="#fff" stroke="#222" strokeWidth="3" style={{ paintOrder: "stroke" }}>
      <text x="130" y="559" textLength="263" lengthAdjust="spacingAndGlyphs">NORTH AMERICA</text>
      <text x="322" y="870" textLength="260" lengthAdjust="spacingAndGlyphs">SOUTH AMERICA</text>
      <text x="683" y="577" textLength="120" lengthAdjust="spacingAndGlyphs">EUROPE</text>
      <text x="1018" y="549" textLength="72" lengthAdjust="spacingAndGlyphs">ASIA</text>
      <text x="692" y="784" textLength="112" lengthAdjust="spacingAndGlyphs">AFRICA</text>
      <text x="1110" y="893" textLength="126" lengthAdjust="spacingAndGlyphs">AUSTRA</text>
    </g>
    <g fontFamily="Noto Sans, sans-serif" fontWeight="600" fontSize="30" fill="#93b2cc" stroke="#0a1626" strokeWidth="3" style={{ paintOrder: "stroke" }}>
      <text x="426" y="667" textLength="124" lengthAdjust="spacingAndGlyphs">Atlantic</text>
      <text x="440" y="699" textLength="97" lengthAdjust="spacingAndGlyphs">Ocean</text>
      <text x="909" y="875" textLength="100" lengthAdjust="spacingAndGlyphs">Indian</text>
      <text x="911" y="908" textLength="97" lengthAdjust="spacingAndGlyphs">Ocean</text>
    </g>
    {MAP_PIES.map(([x, y, r], k) => (
      <MapPie key={k} x={x} y={y} r={r} k={k} />
    ))}
    <g fontFamily="Open Sans, sans-serif" fontSize="32" fill="#f5f5f5" textAnchor="middle">
      {MAP_NUMBERS.map(([x, y, t]) => (
        <text key={t} x={x} y={y + 11.500} textLength="54">{t}</text>
      ))}
    </g>
    <path d="M81 1002h12v12H81z" fill="#f25022" />
    <path d="M95 1002h12v12H95z" fill="#7fba00" />
    <path d="M81 1016h12v12H81z" fill="#00a4ef" />
    <path d="M95 1016h12v12H95z" fill="#ffb900" />
    <g fontFamily="Liberation Sans, sans-serif" fontSize="23" fill="#fff" stroke="#111" strokeWidth="1.500" style={{ paintOrder: "stroke" }}>
      <text x="113" y="1023" textLength="139" lengthAdjust="spacingAndGlyphs">Microsoft Bing</text>
      <text x="253" y="1007" textLength="832" lengthAdjust="spacingAndGlyphs">© 2023 TomTom, Earthstar Geographics SIO, © 2023 Microsoft Corporation,</text>
      <text x="1104" y="1007" textLength="64" lengthAdjust="spacingAndGlyphs" fill="#cfe0ff" textDecoration="underline">Terms</text>
      <text x="886" y="1034" textLength="199" lengthAdjust="spacingAndGlyphs" fill="#cfe0ff" textDecoration="underline">© OpenStreetMap</text>
    </g>
  </Svg>
);

/* ---------- visual gallery icons, 72-unit grid ---------- */
const ax = <path d="M3.500 2v67.500H71" stroke={INK} strokeWidth="4" />;
const R = ({ x, y, w, h, f = "#fff", s = GREY, sw = 3.5 }) => <rect x={x} y={y} width={w} height={h} fill={f} stroke={s} strokeWidth={sw} />;
const VIZ = [
  <>{ax}<R x={6} y={10} w={16} h={16} s={INK} /><R x={22} y={10} w={25} h={16} f={SKY} s={BLUE} /><R x={6} y={40} w={24} h={16} s={GREY} /><R x={30} y={40} w={32} h={16} f={LGREY} /></>,
  <>{ax}<R x={16} y={46} w={15} h={23} s={INK} /><R x={16} y={22} w={15} h={24} f={SKY} s={BLUE} /><R x={46} y={42} w={16} h={27} /><R x={46} y={10} w={16} h={32} f={LGREY} /></>,
  <>{ax}<R x={5} y={6} w={60} h={13} f={SKY} s={BLUE} /><R x={5} y={22} w={35} h={11} s={INK} /><R x={5} y={36} w={27} h={11} f={LGREY} /><R x={5} y={50} w={45} h={13} s={INK} /></>,
  <>{ax}<R x={9} y={6} w={12} h={62} f={SKY} s={BLUE} /><R x={24} y={31} w={12} h={37} f="#fff" s={GREY} /><R x={37} y={40} w={13} h={28} f={LGREY} /><R x={53} y={22} w={12} h={46} s={INK} /></>,
  <>{ax}<R x={5} y={10} w={12} h={16} s={INK} /><R x={17} y={10} w={44} h={16} f={SKY} s={BLUE} /><R x={5} y={40} w={36} h={16} s={INK} /><R x={41} y={40} w={20} h={16} f={LGREY} /></>,
  <>{ax}<R x={14} y={10} w={16} h={44} f={SKY} s={BLUE} /><R x={14} y={54} w={16} h={15} s={INK} /><R x={45} y={34} w={16} h={35} s={INK} /><R x={45} y={10} w={16} h={24} f={LGREY} /></>,
  <>{ax}<path d="M6 38L26 17 42 35 52 32 69 14" stroke={INK} strokeWidth="3.500" /><path d="M6 53L44 14 70 38" stroke="#2a86c8" strokeWidth="3.500" /></>,
  <><path d="M39 38L53 1 70 27V68L48 45z" fill={LGREY} stroke="#979593" strokeWidth="3" /><path d="M3 36L24 8 48 38 30 62 3 62z" fill="#fff" stroke={INK} strokeWidth="3.500" /><path d="M3 46L20 62 40 30 68 68H3z" fill={SKY} stroke={BLUE} strokeWidth="3.500" /></>,
  <><path d="M4 8L18 22 34 10 44 22 54 14 70 14V45L54 35 30 56 20 50 4 50z" fill={SKY} stroke={BLUE} strokeWidth="3.500" />{ax}</>,
  <>{ax}<R x={15} y={12} w={14} h={42} f={SKY} s={BLUE} /><R x={45} y={12} w={16} h={30} f={LGREY} /><R x={45} y={42} w={16} h={26} /><path d="M5 66L25 40 38 54 68 26" stroke={INK} strokeWidth="3.500" /></>,
  <>{ax}<R x={12} y={34} w={14} h={34} f={SKY} s={BLUE} /><R x={28} y={8} w={14} h={60} s={INK} /><R x={45} y={22} w={14} h={46} f={LGREY} /><path d="M5 66L30 38 44 54 68 30" stroke={INK} strokeWidth="3.500" /></>,
  <><path d="M6 12q10 0 16 8t14 6 14-10 20-6v16q-10 0-18 10t-18 6-12-12-16-8z" fill={LGREY} stroke={GREY} strokeWidth="2.500" /><path d="M6 38h20q10 20 22 0h22M6 54h24M46 54h24" stroke="#e07010" strokeWidth="7" /><path d="M6 30q12 2 18 14t14 10 14-14 18-10" stroke={BLUE} strokeWidth="10" /><path d="M6 30q12 2 18 14t14 10 14-14 18-10" stroke={SKY} strokeWidth="4" />{ax}</>,
  <>{ax}<R x={14} y={18} w={16} h={50} s={INK} /><R x={29} y={18} w={10} h={18} f={GREY} s={GREY} /><R x={40} y={4} w={10} h={32} f={SKY} s={BLUE} /><R x={52} y={6} w={16} h={62} f="#fff" s={INK} /><path d="M60 6v62" stroke={GREY} strokeWidth="4" /></>,
  <><R x={3} y={4} w={66} h={18} f={SKY} s={BLUE} /><R x={12} y={22} w={48} h={20} f={SKY} s={BLUE} /><R x={22} y={42} w={28} h={22} f={SKY} s={BLUE} /></>,
  <>{ax}<R x={49} y={6} w={10} h={10} f={INK} s={INK} sw={2} /><R x={14} y={17} w={10} h={10} f={SKY} s="#5a9fd8" sw={2} /><R x={33} y={29} w={9} h={9} f={SKY} s="#5a9fd8" sw={2} /><R x={13} y={47} w={10} h={10} f={INK} s={INK} sw={2} /><R x={50} y={44} w={10} h={10} f={SKY} s="#5a9fd8" sw={2} /></>,
  <><circle cx="36" cy="36" r="32" fill="#fff" stroke={INK} strokeWidth="3.500" /><path d="M36 4A32 32 0 0 1 60 58L36 36z" fill={SKY} stroke={BLUE} strokeWidth="3.500" /></>,
  <><circle cx="36" cy="36" r="32" fill={SKY} stroke={BLUE} strokeWidth="3.500" /><path d="M36 4A32 32 0 0 0 4 36H20A16 16 0 0 1 36 20z" fill="#fff" stroke={GREY} strokeWidth="3" /><circle cx="36" cy="36" r="16" fill="#f3f2f1" stroke={INK} strokeWidth="3.500" /></>,
  <><R x={3} y={4} w={66} h={64} s={INK} /><R x={3} y={4} w={31} h={64} f={SKY} s={BLUE} /><path d="M4 38h30" stroke={BLUE} strokeWidth="3" /><path d="M35 22h34M52 22v46M35 42h17M52 48h17" stroke={GREY} strokeWidth="3" /></>,
  <><circle cx="38" cy="30" r="23" fill="#fff" stroke={INK} strokeWidth="3" /><path d="M24 14q12-8 16 2t-6 12-12 0zM44 30q12-4 12 4t-12 14-8-8zM50 12l8 12-8 2z" fill="#2f9e4f" /><path d="M36 3Q12 2 11 28t28 28q16 0 24-14M38 56v11M14 68h48" stroke={INK} strokeWidth="3.500" /></>,
  <><path d="M3 6h30q6 10 14 6l20-4v28q-4 20-18 24t-24 2q-8-10-14-6-8-20-8-50z" fill={LGREY} stroke={GREY} strokeWidth="3" /><path d="M3 6h30l-6 26-16 6q-8-12-8-32z" fill={SKY} stroke={BLUE} strokeWidth="3.500" /><path d="M40 36h27q-4 20-18 22l-14 2q-2-12 5-24z" fill={SKY} stroke={BLUE} strokeWidth="3.500" /></>,
  <><path d="M48 0L6 64 38 52z" fill="#4fb4e8" /><path d="M48 0L66 74 38 52z" fill="#1a78c8" /><path d="M48 0L44 56l-6-4-32 12z" fill="#3aa0d0" /></>,
  <><path d="M3 54Q6 18 36 18T69 54H52Q50 36 36 36T19 54z" fill={SKY} stroke={BLUE} strokeWidth="3.500" /><path d="M3 54Q5 30 20 22l8 16q-8 4-9 16z" fill="#fff" stroke={INK} strokeWidth="3.500" /><path d="M32 54L46 32 40 56z" fill={INK} stroke={INK} strokeWidth="3" /></>,
  <><R x={3} y={11} w={66} h={48} s={INK} /><text x="36" y="47" fontSize="33" fill="#1a8fd0" textAnchor="middle" textLength="52" fontFamily="Open Sans, sans-serif">123</text></>,
  <><R x={3} y={4} w={66} h={64} s={INK} /><path d="M14 14v44" stroke={INK} strokeWidth="3" /><path d="M20 20h36M20 44h36" stroke={BLUE} strokeWidth="6" /><path d="M20 30h18M20 54h18" stroke="#a19f9d" strokeWidth="4" /></>,
  <><R x={3} y={8} w={66} h={54} s={INK} /><path d="M24 18l13 23H11z" fill="#4aa564" stroke="#2f8f4a" strokeWidth="2" /><path d="M36 18h26L49 40z" fill="#e8374a" /><path d="M10 50h52" stroke="#a19f9d" strokeWidth="3" /></>,
  <><R x={3} y={4} w={66} h={64} s={INK} /><path d="M3 9h66" stroke="#a19f9d" strokeWidth="8" /><R x={14} y={25} w={10} h={10} f={LGREY} s={GREY} /><R x={14} y={45} w={10} h={10} f={LGREY} s={GREY} /><path d="M34 38h37L58 54v15H48V54z" fill="#fff" stroke={INK} strokeWidth="3.500" /></>,
  <><R x={3} y={4} w={66} h={64} s={INK} /><path d="M4 10h64" stroke="#a19f9d" strokeWidth="10" /><path d="M3 16h66M3 34h66M3 51h66M25 16v52M47 16v52" stroke={GREY} strokeWidth="3" /></>,
  <><R x={3} y={4} w={66} h={64} s={INK} /><R x={47} y={16} w={22} h={52} f={SKY} s={BLUE} /><R x={3} y={51} w={66} h={17} f={SKY} s={BLUE} /><path d="M4 10h64" stroke="#a19f9d" strokeWidth="10" /><path d="M3 16h66M3 34h66M25 16v52M47 16v52" stroke={INK} strokeWidth="3" /></>,
  "R",
  "Py",
  <>{ax}<path d="M5 16h44" stroke="#2a7fb8" strokeWidth="3.500" /><circle cx="57" cy="16" r="8" fill={SKY} stroke={BLUE} strokeWidth="3.500" /><path d="M5 34h32M5 52h16" stroke={GREY} strokeWidth="3" /><circle cx="42" cy="34" r="5" stroke={GREY} strokeWidth="3.500" /><circle cx="26" cy="52" r="5" stroke={GREY} strokeWidth="3.500" /></>,
  <><path d="M26 36h18M56 12H38v50h18" stroke={INK} strokeWidth="3.500" /><R x={3} y={29} w={24} h={14} f={SKY} s={BLUE} /><R x={46} y={5} w={23} h={14} f={SKY} s={BLUE} /><R x={46} y={29} w={23} h={14} f={SKY} s={BLUE} /><R x={46} y={53} w={23} h={14} f={SKY} s={BLUE} /></>,
  <path d="M3 9h66v42H34L18 66V51H3z" fill="#fff" stroke={BLUE} strokeWidth="4" />,
  <><path d="M11 18V4h36l18 16v48H11V42M46 4v17h18" fill="#fff" stroke={INK} strokeWidth="3.500" /><circle cx="14" cy="30" r="6.500" fill="#fff" stroke="#2a7fb8" strokeWidth="4" /><path d="M24 34h30M20 48h10M36 48h16" stroke="#4a9fd8" strokeWidth="3.500" /></>,
  <><path d="M16 4h40v16q0 26-20 28Q16 46 16 20zM16 10H4q0 24 16 26M56 10h12q0 24-16 26M36 48v12" fill="#fff" stroke={INK} strokeWidth="4" /><path d="M14 6h44M26 60h20v7H20z" stroke={BLUE} strokeWidth="5" fill={SKY} /></>,
  <><path d="M9 2h38l18 18v52H9zM46 2v19h18" fill="#fff" stroke={INK} strokeWidth="3.500" /><path d="M18 44h9v22h-9zM32 54h9v12h-9zM46 36h9v30h-9z" fill={INK} /></>,
  <><R x={3} y={12} w={66} h={48} s={INK} /><text x="42" y="48" fontSize="31" fill="#1a8fd0" textAnchor="middle" textLength="44" fontFamily="Open Sans, sans-serif">123</text><path d="M10 54h54" stroke="#a19f9d" strokeWidth="3" /><path d="M12 1h18L24 14h10L2 44l8-22H1z" fill="#fbd48a" stroke="#e07010" strokeWidth="4" /></>,
  <><path d="M5 20h62v48H5z" fill="#fff" /><path d="M28 5h40v30H54q-4 16-12 16l-6 17H5V40M68 5v30H54l-8 14-16 2z" fill={SKY} stroke={BLUE} strokeWidth="4" /><path d="M6 38l26-8-10 36H6z" fill="#fff" /><path d="M0 4h24v20L12 40 0 24z" fill="#d8700f" /><circle cx="12" cy="14" r="5" fill="#fff" /><circle cx="62" cy="59" r="10" fill="#d8700f" /><circle cx="68" cy="40" r="6" fill="#d8700f" /></>,
  <path d="M3 36L24 9q4-4 12 4 8-8 12-4L69 36 48 63q-4 4-12-4-8 8-12 4zM36 13L19 36l17 23M36 13l17 23-17 23M27 25l26 0M19 36l8 11h26" stroke="#8a3a98" strokeWidth="3.500" />,
  <path d="M4 8h42L69 36 46 64H4l20-28zM22 8l24 28-24 28M46 36L24 62M34 36L12 62" stroke="#1a72c4" strokeWidth="3.500" fill="#eef6fc" />,
  <path d="M9 28h5v5H9zM33 28h5v5h-5zM57 28h5v5h-5z" fill={INK} />,
];

const YEARS = Array.from({ length: 22 }, (_, i) => 1970 + i);
const TYPES = [["14", "#118dff"], ["21", "#12239e"], ["19", "#e66c37"], ["4", "#6b007b"], ["3", "#e044a7"], ["2", "#744ec2"], ["22", "#d9b300"], ["15", "#d64550"], ["10", "#197278"], ["7", "#1aab40"]];
const TABS = [["File", 26, 47, 0], ["Home", 48, 39, -0.3], ["Insert", 43, 40, -0.15], ["Modeling", 75, 39, 0], ["View", 37, 38, -0.2], ["Optimize", 70, 40, 0], ["Help", 37, 0, -0.2]];

export default function App() {
  return (
    <App_>
      <GlobalStyle />
      <TitleBar>
        <QuickAccess>
          <Svg w={18} h={18} stroke="#fff" strokeWidth="1.200"><path d="M0.600 0.600h16.800v16.800H3L0.600 15zM4 0.600v6.800h10V0.600M5 17v-5.500h8V17M7.500 17v-3.500" /></Svg>
          <Svg w={17} h={18} stroke="#8a8886" strokeWidth="1.200"><path d="M0.800 0v7.500h7M1 7.500L7.500 2c4.500-3.500 10 1.500 7.500 6-1.500 3-5 5.500-7.500 9.500" /></Svg>
          <Svg w={17} h={18} stroke="#8a8886" strokeWidth="1.200"><path d="M16.200 0v7.500h-7M16 7.500L9.500 2C5-1.500-0.500 3.500 2 8c1.500 3 5 5.500 7.500 9.500" /></Svg>
        </QuickAccess>
        <DocName>taran</DocName>
        <WindowTools>
          <SignIn>Sign in</SignIn>
          <Svg w={25}><circle cx="12.500" cy="12.500" r="12.400" fill="#f3f2f1" /><circle cx="12.500" cy="7" r="3.700" stroke="#1b1a19" strokeWidth="1.400" /><path d="M5.500 13.500h14c1 9-15 9-14 0z" stroke="#1b1a19" strokeWidth="1.400" /></Svg>
          <WinBtn $gap={41}><Svg w={13} h={14} stroke="#fff" strokeWidth="1.300"><path d="M0 8.500h13" /></Svg></WinBtn>
          <WinBtn $gap={41}><Svg w={14} h={14} stroke="#fff" strokeWidth="1.200"><path d="M0.600 3.600h9.800v9.800H0.600zM3.600 3V0.600h9.800v9.800H11" /></Svg></WinBtn>
          <WinBtn $gap={42}><Svg w={13} h={13} stroke="#fff" strokeWidth="1.300"><path d="M0.500 0.500l12 12M12.500 0.500l-12 12" /></Svg></WinBtn>
        </WindowTools>
      </TitleBar>

      <Ribbon>
        <TabRow>
          {TABS.map(([t, w, mr, ls]) => (
            <Tab key={t} $w={w} $mr={mr} $ls={ls} $active={t === "Home"}>{t}</Tab>
          ))}
          <ShareBtn>
            <Svg w={20} h={18} stroke="#fff" strokeWidth="1.300"><path d="M4.500 4.500H0.800v12.800h14V13M13 1l6.300 5.700L13 12.300V9C9 9 6.500 10 4.500 13 5 8 8 4.500 13 4.300z" /></Svg>
            <ShareText>Share</ShareText>
            <Svg w={13} h={8} stroke="#fff" strokeWidth="1.400"><path d="M0.800 1l5.700 5.700L12.200 1" /></Svg>
          </ShareBtn>
        </TabRow>
        <Groups>
          <Group $w={201}>
            <GroupItems $pl={8}>
              <RibbonItem w={54} icon="paste" l1="Paste" off />
              <ClipList>
                <ClipRow $mt={-6}>
                  <Svg w={15} h={20} opacity="0.550"><path d="M3 0l6.500 14M11 0L4.500 14" stroke="#605e5c" strokeWidth="1.300" /><circle cx="3.200" cy="16" r="2.600" stroke="#2a82c4" strokeWidth="1.400" /><circle cx="10.800" cy="16" r="2.600" stroke="#2a82c4" strokeWidth="1.400" /></Svg>
                  Cut
                </ClipRow>
                <ClipRow>
                  <WideGlyph><Svg w={20} h={20} opacity="0.450"><path d="M9 17H0.700V0.700h10V4" stroke="#3b3a39" strokeWidth="1.300" /><path d="M7.700 2.700h7l4.600 5v11.600H7.700zM14.500 3v5h5M10 11h7M10 14h7M10 16.500h7" stroke="#3b3a39" strokeWidth="1.200" fill="#fff" /></Svg></WideGlyph>
                  Copy
                </ClipRow>
                <ClipRow>
                  <WideGlyph><Svg w={20} h={20} opacity="0.500"><path d="M0.800 7.500L8 6l5 6-4 7z" stroke="#e0802c" strokeWidth="1.400" fill="#fbe5c0" /><path d="M8 5l3-2 6 7-3 3zM13 4l4-4 2 2-3 5" stroke="#484644" strokeWidth="1.300" fill="#fff" /></Svg></WideGlyph>
                  Format painter
                </ClipRow>
              </ClipList>
            </GroupItems>
            <GroupName>Clipboard</GroupName>
          </Group>
          {GROUPS.map((g) => (
            <Group key={g.name} $w={g.w}>
              <GroupItems $pl={g.pl}>
                {g.items.map((it) => <RibbonItem key={it.icon} {...it} />)}
              </GroupItems>
              <GroupName>{g.name}</GroupName>
            </Group>
          ))}
          <Collapse>
            <Svg w={11} h={8} stroke={INK} strokeWidth="1.900"><path d="M1 6.500L5.500 1.800 10 6.500" /></Svg>
          </Collapse>
        </Groups>
      </Ribbon>

      <Work>
        <Left>
          <LeftTop>
            <Rail>
              <RailItem $active $h={50} $pl={14}>
                <Svg w={18} h={18} stroke="#252423" strokeWidth="1.500"><path d="M1 0v17h17M4 4.500h3V14H4zM9 7.500h2.500V14H9zM13.500 1.500H16V14h-2.500z" /></Svg>
              </RailItem>
              <RailItem $pl={12}>
                <Svg w={21} h={20} stroke="#797775" strokeWidth="1.300"><path d="M0.700 0.700h19.600v18.600H0.700zM0.700 4h19.600M0.700 9h19.600M0.700 14h19.600M7.500 4v15M14 4v15" /></Svg>
              </RailItem>
              <RailItem $pl={11} $h={51}>
                <Svg w={23} h={23} stroke="#797775" strokeWidth="1.300"><path d="M0.700 7h9v8h-9zM0.700 9h9M13.500 0.700h9v6h-9zM13.500 2.500h9M13.500 13.500h9v8.500h-9zM13.500 16h9M5 7V3.500h8.500M5 15v4h8.500" /></Svg>
              </RailItem>
            </Rail>
            <Stage>
              <Report>
                <SlicerRow>
                  <Slicer>
                    {YEARS.map((y) => <Year key={y}>{y}</Year>)}
                    <SlicerNext><Svg w={9} h={15} stroke="#5c545c" strokeWidth="1.200"><path d="M1 0.500l7 7-7 7" /></Svg></SlicerNext>
                  </Slicer>
                </SlicerRow>
                <VisualRow $h={291.5}>
                  <Visual $bg="radial-gradient(300px 200px at 20% 5%, #403c48, rgba(64,60,72,0)), linear-gradient(100deg, #40303c 0%, #3f3640 45%, #52494b 80%, #5c504f 100%)">
                    <VisualTitle $ml={80.5}>Sum of targsubtype1 by targtype1</VisualTitle>
                    <VisualBody>
                      <Donut />
                      <Legend $pt={1}>
                        <LegendTitle>targtype1</LegendTitle>
                        {TYPES.map(([t, c]) => <LegendItem key={t} $h={23.06} $pl={1}><Dot $c={c} />{t}</LegendItem>)}
                        <LegendMore><Svg w={18} h={9}><path d="M2 1h13.500L8.700 7.500z" stroke="#fff" strokeWidth="1.700" fill={INK} /></Svg></LegendMore>
                      </Legend>
                    </VisualBody>
                  </Visual>
                  <Visual $bg="radial-gradient(300px 150px at 60% 108%, #c9b492 0%, rgba(201,180,146,0) 100%), radial-gradient(150px 150px at 100% 100%, #a87c7c 0%, rgba(168,124,124,0) 100%), radial-gradient(240px 240px at 0% 90%, #875f5e 0%, rgba(135,95,94,0) 100%), radial-gradient(230px 200px at 70% 65%, #adadae 0%, rgba(173,173,174,0) 100%), linear-gradient(90deg, #746b79 0%, #858694 45%, #949eb2 100%)">
                    <VisualTitle $ml={77} $mt={-1.5} $ls={0.05}>Count of summary by success</VisualTitle>
                    <VisualBody>
                      <Pie />
                      <Legend $pt={103.5}>
                        <LegendTitle $ls={-0.1}>success</LegendTitle>
                        <LegendItem $h={22} $pl={2}><Dot $c="#e6d166" />1</LegendItem>
                        <LegendItem $h={22} $pl={2}><Dot $c="#d64550" />0</LegendItem>
                      </Legend>
                    </VisualBody>
                  </Visual>
                  <MapVisual>
                    <MapTitle>Average of latitude, Average of longitude and Median of country by country and city</MapTitle>
                    <MapLegend>
                      <b>Location</b>
                      <MapKey><Dot $c="#118dff" />A Coruna district</MapKey>
                      <MapKey><Dot $c="#12239e" />Abra de Ilog</MapKey>
                      <MapKey><Dot $c="#e66c37" />Abu Bushut</MapKey>
                      <MapKey><Dot $c="#6b007b" />Acocasa</MapKey>
                      <Svg w={5} h={10}><path d="M0 0l5 5-5 5z" fill="#252423" /></Svg>
                    </MapLegend>
                    <MapBox><WorldMap /></MapBox>
                  </MapVisual>
                </VisualRow>
                <VisualRow $h={304.5}>
                  <Visual $bg="radial-gradient(300px 200px at 90% 65%, #846848 0%, rgba(132,104,72,0) 100%), radial-gradient(170px 90px at 100% 100%, #7c4a34 0%, rgba(124,74,52,0) 100%), radial-gradient(200px 90px at 85% 0%, #4c4044 0%, rgba(76,64,68,0) 100%), linear-gradient(155deg, #443340 0%, #4a2f36 25%, #563a36 50%, #604a3a 75%, #6c4f38 100%)">
                    <VisualTitle $ml={80}>Sum of targtype2 by targtype1_txt</VisualTitle>
                    <VisualBody><BarChart /></VisualBody>
                  </Visual>
                  <Visual $bg="radial-gradient(260px 150px at 45% 0%, #575040 0%, rgba(87,80,64,0) 100%), radial-gradient(220px 170px at 0% 50%, #58472e 0%, rgba(88,71,46,0) 100%), linear-gradient(140deg, #45383a 0%, #4a3a30 30%, #46302c 50%, #35191f 78%, #2b161d 100%)">
                    <VisualTitle $ml={67} $mt={0} $ls={0.08}>Count of target1 by targsubtype1</VisualTitle>
                    <VisualBody><LineChart /></VisualBody>
                  </Visual>
                  <Visual $bg="radial-gradient(90px 120px at 0% 0%, #4e3644 0%, rgba(78,54,68,0) 100%), radial-gradient(260px 120px at 75% 0%, #2a1a38 0%, rgba(42,26,56,0) 100%), radial-gradient(150px 260px at 0% 80%, #3d1025 0%, rgba(61,16,37,0) 100%), linear-gradient(120deg, #2c1a28 0%, #20141f 45%, #171017 75%, #100b11 100%)">
                    <CardFrame>
                      <CardLabel>Sum of eventid</CardLabel>
                      <CardValue>740T</CardValue>
                    </CardFrame>
                  </Visual>
                </VisualRow>
              </Report>
            </Stage>
            <Filters>
              <FilterTop>
                <PaneHead>
                  <Svg w={29} h={19} stroke="#252423" strokeWidth="2"><path d="M5 1.200h19.500l-7.500 8V18h-5V9.200z" /></Svg>
                  <PaneTitle $ml={6}>Filters</PaneTitle>
                  <EyeWrap><Svg w={16} h={12} stroke="#252423" strokeWidth="1.300"><path d="M0.500 7C3-1 13-1 15.500 7" /><circle cx="8" cy="7.500" r="2.500" /></Svg></EyeWrap>
                  <Chevrons />
                </PaneHead>
                <SearchBox $w={225} $h={38} $bc="#b3b0ad" $gap={18} $pl={13} $c="#484644"><Lens />Search</SearchBox>
              </FilterTop>
              <FilterGroup $mt={20.5}>
                <FilterHead>Filters on this page<Dots /></FilterHead>
                <DropWell>Add data fields here</DropWell>
              </FilterGroup>
              <FilterGroup $mt={34}>
                <FilterHead>Filters on all pages<Dots /></FilterHead>
                <DropWell>Add data fields here</DropWell>
              </FilterGroup>
            </Filters>
          </LeftTop>
          <PageBar>
            <ViewMode $on $mr={25} $pt={9}><Svg w={25} h={18} stroke="#201f1e" strokeWidth="1.600"><path d="M1 1h23v12.500H1zM12.500 13.500V17M8 17h9" /></Svg></ViewMode>
            <ViewMode $mr={-1} $pt={6}><Svg w={17} h={26} stroke="#605e5c" strokeWidth="1.600"><path d="M1.500 1h13.500v23.500H1.500zM7 21.500h3" /></Svg></ViewMode>
            <PageArrows>
              <Svg w={7} h={12}><path d="M7 0v12L0 6z" fill="#c8c6c4" /></Svg>
              <Svg w={7} h={12}><path d="M0 0v12l7-6z" fill="#c8c6c4" /></Svg>
            </PageArrows>
            <PageTab>Page 1</PageTab>
            <AddPage><Svg w={14} h={14} stroke="#fff" strokeWidth="3.200"><path d="M7 0v14M0 7h14" /></Svg></AddPage>
          </PageBar>
        </Left>

        <Viz>
          <VizHead>
            <PaneHead $ls={0.1}><PaneTitle>Visualizations</PaneTitle><Chevrons /></PaneHead>
            <BuildLabel>Build visual</BuildLabel>
            <ModeRow>
              <Mode $on><Svg w={30} h={30}><path d="M0 0.700h24" stroke="#252423" strokeWidth="1.400" /><path d="M0.700 6.700h28.600v9H0.700zM0.700 20.200h28.600v9H0.700z" fill={GREEN} stroke="#252423" strokeWidth="1.400" strokeDasharray="2.500 1.500" /></Svg></Mode>
              <Mode><Svg w={30} h={30} stroke="#252423" strokeWidth="1.400"><path d="M5 29.300H0.700V0.700h13l8 8.500v2M13 1v9h8" /><path d="M29 12L19.500 24l-2.500-2.500zM17 21.500q-4-1-5 4-1 3-4 3 9 3 11.500-4.500z" fill="#fff" /></Svg></Mode>
            </ModeRow>
          </VizHead>
          <Svg w={225} h={16}><path d="M0 9.500h20l10-9.500 10 9.500h185" stroke="#8a8886" strokeWidth="1.200" transform="translate(0 6)" /></Svg>
          <IconGrid>
            {VIZ.map((v, i) => typeof v === "string" ? (
              <Glyph key={i} $pr={v === "R" ? 4 : 2}>{v}</Glyph>
            ) : (
              <Svg key={i} w={24} vb="0 0 72 72">{v}</Svg>
            ))}
          </IconGrid>
          <FieldLabel $mt={11}>Values</FieldLabel>
          <FieldWell $h={35} $mt={6} $pl={13}>Add data fields here</FieldWell>
          <FieldLabel $mt={14} $fw={500}>Drill through</FieldLabel>
          <ToggleRow $mt={11}>Cross-report<Toggle>Off</Toggle></ToggleRow>
          <ToggleRow $mt={14}>Keep all filters<Toggle $on>On</Toggle></ToggleRow>
          <FieldWell $h={32} $mt={13} $pl={10}>Add drill-through fields here</FieldWell>
        </Viz>

        <DataPane>
          <DataTitle><PaneTitle>Data</PaneTitle><Chevrons /></DataTitle>
          <DataSearch $w={215} $h={33} $bc="#605e5c" $gap={8} $pl={9} $c="#605e5c"><Lens c="#3a5470" />Search</DataSearch>
          <TableRow>
            <Svg w={8} h={14} stroke="#605e5c" strokeWidth="1.200"><path d="M0.600 0.500L7 7l-6.400 6.500" /></Svg>
            <Svg w={25} h={15} vb="-9 0 25 15" stroke="#252423" strokeWidth="1.300"><rect x="0.700" y="0.700" width="14" height="13.600" rx="2" /><path d="M5.300 1v13M10.200 1v13M1 5h14M1 10h14" /></Svg>
            <TableName>globalterrorismdb_071...</TableName>
          </TableRow>
        </DataPane>
      </Work>

      <Status>
        Page 1 of 1
        <Zoom>
          <Svg w={153} h={14} stroke="#605e5c"><path d="M0 7.500h6M143 7.500h10M148 2.500v10" strokeWidth="2" /><path d="M11 7h125" strokeWidth="1.200" /><path d="M55.500 0.500v13" strokeWidth="5" /><path d="M74 3.500v7" strokeWidth="2" /></Svg>
          <Pct>73%</Pct>
          <Svg w={21} h={16} stroke="#605e5c"><path d="M1 1h19v14H1z" strokeWidth="1.500" /><path d="M4 6V4h3M14 4h3v2M4 10v2h3M14 12h3v-2" strokeWidth="1.200" /></Svg>
        </Zoom>
      </Status>
    </App_>
  );
}
